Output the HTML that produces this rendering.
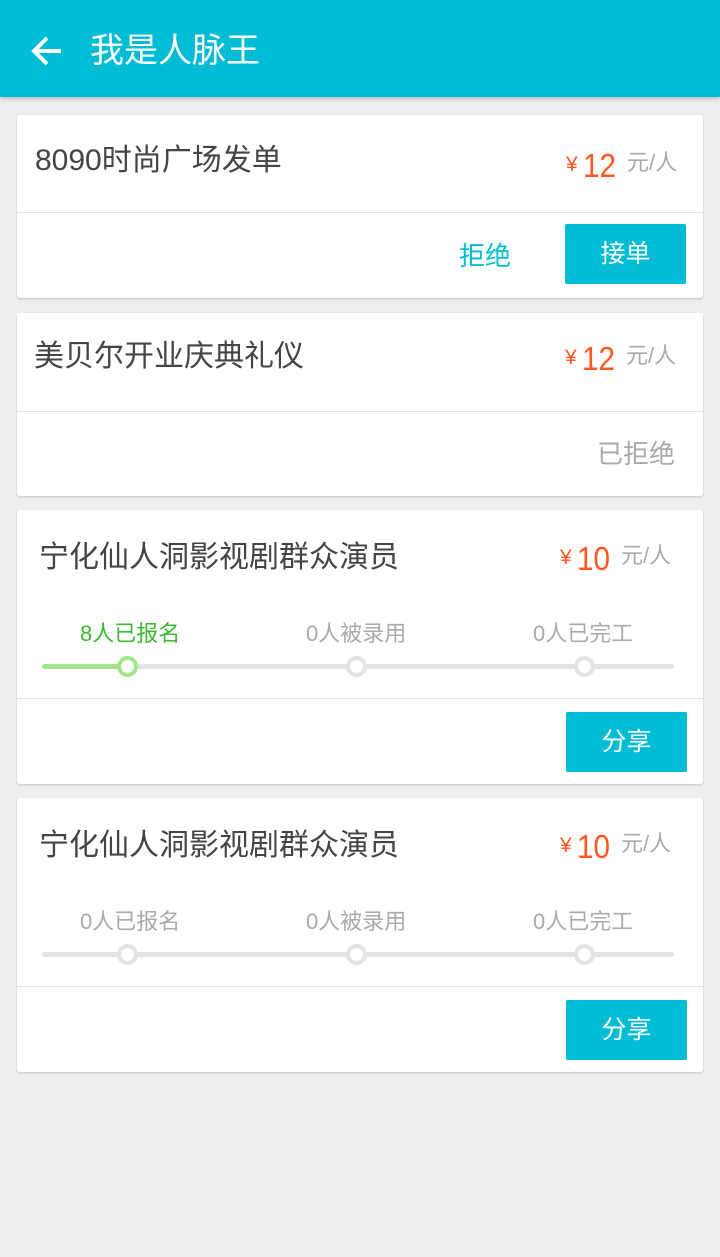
<!DOCTYPE html>
<html><head><meta charset="utf-8"><style>
*{margin:0;padding:0;box-sizing:border-box}
body{width:720px;height:1257px;background:#eeeeee;position:relative;overflow:hidden;font-family:"Liberation Sans","Noto Sans CJK SC",sans-serif}
.hd{position:absolute;left:0;top:0;width:720px;height:97px;background:#00bcd4;box-shadow:0 2px 4px rgba(0,0,0,.2)}
.t{position:absolute;white-space:nowrap;line-height:1}
.card{position:absolute;left:17px;width:686px;background:#fff;border-radius:3px;box-shadow:0 1px 2px rgba(0,0,0,.18)}
.div{position:absolute;left:0;width:686px;height:1px;background:#e2e2e2}
.btn{position:absolute;width:121px;height:60px;background:#00bcd4;color:#fff;font-size:25px;line-height:60px;text-align:center;border-radius:2px}
.title{font-size:30px;color:#444}
.y{font-size:21px;color:#ff5722}
.n{font-size:33px;color:#ff5722;transform:scaleX(.9);transform-origin:left}
.u{font-size:22px;color:#aaa}
.st{font-size:21px;color:#aaa}
.bar{position:absolute;height:5px;border-radius:3px;background:#e3e3e3}
.dot{position:absolute;width:21px;height:21px;border-radius:50%;background:#fff;border:4px solid #e3e3e3}
</style></head><body>
<div class="hd">
<svg style="position:absolute;left:30px;top:34px" width="34" height="34" viewBox="0 0 34 34"><path d="M31 17H5M17 4L4 17l13 13" stroke="#fff" stroke-width="4" fill="none"/></svg>
<div class="t" style="left:90px;top:34px;font-size:34px;color:#fff">我是人脉王</div>
</div>

<div class="card" style="top:115px;height:183px">
<div class="t title" style="left:18px;top:31px">8090时尚广场发单</div>
<div class="t y" style="left:549px;top:39px">¥</div>
<div class="t n" style="left:566px;top:34px">12</div>
<div class="t u" style="left:610px;top:37px">元/人</div>
<div class="div" style="top:97px"></div>
<div class="t" style="left:442px;top:128px;font-size:26px;color:#00bcd4">拒绝</div>
<div class="btn" style="left:548px;top:109px">接单</div>
</div>

<div class="card" style="top:313px;height:183px">
<div class="t title" style="left:17px;top:29px">美贝尔开业庆典礼仪</div>
<div class="t y" style="left:548px;top:34px">¥</div>
<div class="t n" style="left:565px;top:29px">12</div>
<div class="t u" style="left:609px;top:32px">元/人</div>
<div class="div" style="top:98px"></div>
<div class="t" style="left:580px;top:128px;font-size:26px;color:#aaa">已拒绝</div>
</div>

<div class="card" style="top:510px;height:274px">
<div class="t title" style="left:22px;top:33px">宁化仙人洞影视剧群众演员</div>
<div class="t y" style="left:543px;top:37px">¥</div>
<div class="t n" style="left:560px;top:32px">10</div>
<div class="t u" style="left:604px;top:35px">元/人</div>
<div class="t st" style="left:63px;top:113px;color:#3cb832;font-size:22px">8人已报名</div>
<div class="t st" style="left:289px;top:113px;font-size:22px">0人被录用</div>
<div class="t st" style="left:516px;top:113px;font-size:22px">0人已完工</div>
<div class="bar" style="left:25px;top:154px;width:632px"></div>
<div class="bar" style="left:25px;top:154px;width:90px;background:#a2e68a"></div>
<div class="dot" style="left:100px;top:146px;border-color:#a2e68a"></div>
<div class="dot" style="left:329px;top:146px"></div>
<div class="dot" style="left:557px;top:146px"></div>
<div class="div" style="top:188px"></div>
<div class="btn" style="left:549px;top:202px">分享</div>
</div>

<div class="card" style="top:798px;height:274px">
<div class="t title" style="left:22px;top:33px">宁化仙人洞影视剧群众演员</div>
<div class="t y" style="left:543px;top:37px">¥</div>
<div class="t n" style="left:560px;top:32px">10</div>
<div class="t u" style="left:604px;top:35px">元/人</div>
<div class="t st" style="left:63px;top:113px;font-size:22px">0人已报名</div>
<div class="t st" style="left:289px;top:113px;font-size:22px">0人被录用</div>
<div class="t st" style="left:516px;top:113px;font-size:22px">0人已完工</div>
<div class="bar" style="left:25px;top:154px;width:632px"></div>
<div class="dot" style="left:100px;top:146px"></div>
<div class="dot" style="left:329px;top:146px"></div>
<div class="dot" style="left:557px;top:146px"></div>
<div class="div" style="top:188px"></div>
<div class="btn" style="left:549px;top:202px">分享</div>
</div>
</body></html>
